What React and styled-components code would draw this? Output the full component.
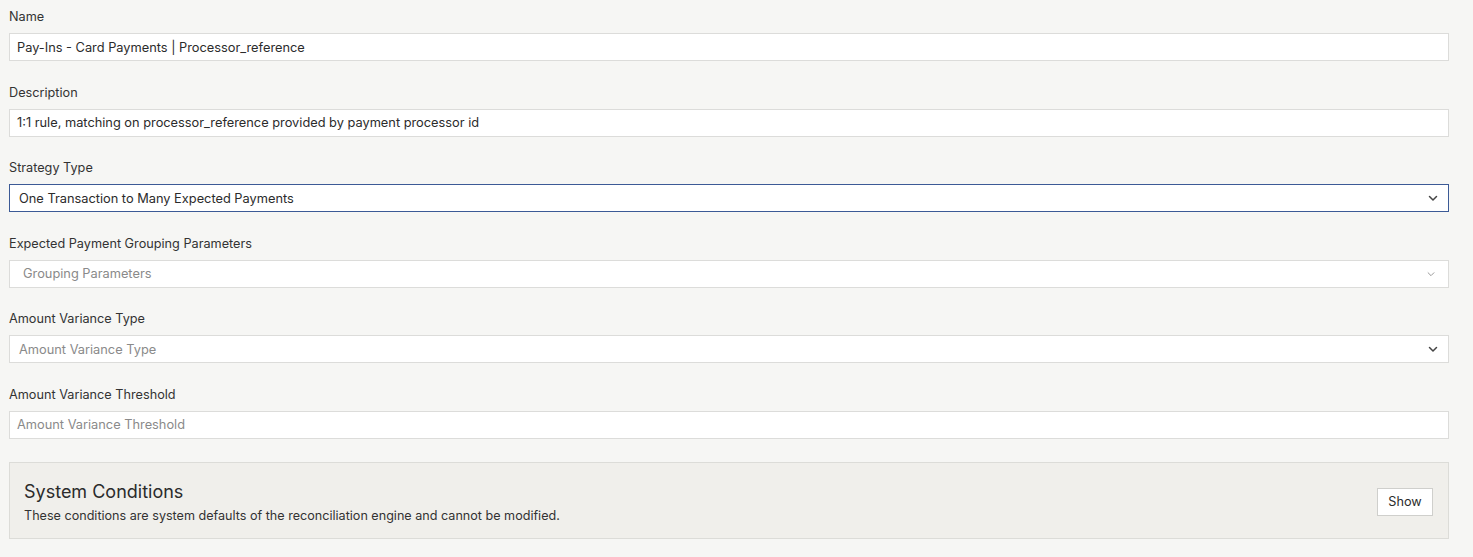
import React from 'react';
import styled, { createGlobalStyle } from 'styled-components';

const GlobalStyle = createGlobalStyle`
  html, body {
    margin: 0;
    padding: 0;
    background: #f6f6f4;
    font-family: Inter, "Noto Sans", sans-serif;
    color: #2b2b2b;
  }
`;

const Form = styled.div`
  padding: 7px 24px 0 9px;
  display: flex;
  flex-direction: column;
  gap: 21.6px;
`;

const Field = styled.div`
  display: flex;
  flex-direction: column;
  gap: 6px;
`;

const Label = styled.label`
  font-size: 12.7px;
  line-height: 20px;
  color: #333;
`;

const Box = styled.div`
  box-sizing: border-box;
  height: 28px;
  display: flex;
  align-items: center;
  justify-content: space-between;
  background: #fff;
  border: 1px solid ${p => (p.$focused ? '#3c5a96' : '#dcdcda')};
  padding: 0 ${p => (p.$small ? 12 : 9)}px 0 ${p => p.$inset || 7}px;
  font-size: 12.8px;
  color: ${p => (p.$placeholder ? '#8a8a8a' : '#2b2b2b')};
`;

const Chevron = ({ light }) => (
  <svg width={light ? 10 : 12} height={light ? 10 : 12} viewBox="0 0 12 12" fill="none">
    <path d="M2.5 4.5 6 8l3.5-3.5" stroke={light ? '#9a9a9a' : '#444'} strokeWidth={light ? 1.2 : 1.5} strokeLinecap="round" strokeLinejoin="round" />
  </svg>
);

const Panel = styled.div`
  margin-top: 1px;
  background: #f0efeb;
  border: 1px solid #dcdcd8;
  padding: 17px 15px 14px 14px;
  display: flex;
  align-items: center;
  justify-content: space-between;
`;

const PanelText = styled.div`
  display: flex;
  flex-direction: column;
  gap: 4px;
`;

const Title = styled.h3`
  margin: 0;
  font-size: 18px;
  font-weight: 400;
  line-height: 24px;
  color: #2b2b2b;
`;

const Sub = styled.p`
  margin: 0;
  font-size: 12.6px;
  line-height: 16px;
  color: #333;
`;

const Button = styled.button`
  box-sizing: border-box;
  height: 28px;
  width: 56px;
  padding: 0;
  background: #fff;
  border: 1px solid #cfcfcc;
  font-family: inherit;
  font-size: 12.7px;
  color: #2b2b2b;
`;

export default function App() {
  return (
    <>
      <GlobalStyle />
      <Form>
        <Field>
          <Label>Name</Label>
          <Box>Pay-Ins - Card Payments | Processor_reference</Box>
        </Field>
        <Field>
          <Label>Description</Label>
          <Box>1:1 rule, matching on processor_reference provided by payment processor id</Box>
        </Field>
        <Field>
          <Label>Strategy Type</Label>
          <Box $focused $inset={9}>
            One Transaction to Many Expected Payments
            <Chevron />
          </Box>
        </Field>
        <Field>
          <Label>Expected Payment Grouping Parameters</Label>
          <Box $placeholder $inset={13} $small>
            Grouping Parameters
            <Chevron light />
          </Box>
        </Field>
        <Field>
          <Label>Amount Variance Type</Label>
          <Box $placeholder $inset={9}>
            Amount Variance Type
            <Chevron />
          </Box>
        </Field>
        <Field>
          <Label>Amount Variance Threshold</Label>
          <Box $placeholder>Amount Variance Threshold</Box>
        </Field>
        <Panel>
          <PanelText>
            <Title>System Conditions</Title>
            <Sub>These conditions are system defaults of the reconciliation engine and cannot be modified.</Sub>
          </PanelText>
          <Button>Show</Button>
        </Panel>
      </Form>
    </>
  );
}
